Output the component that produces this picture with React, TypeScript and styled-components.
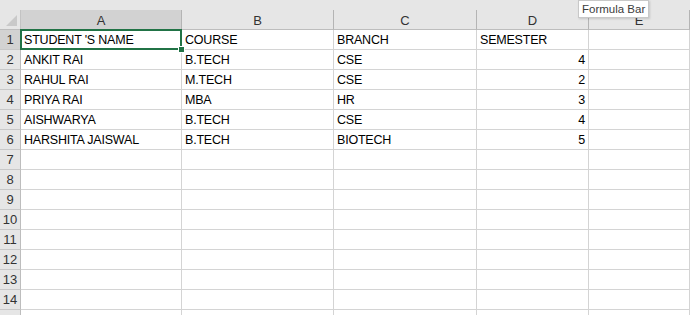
import styled, { createGlobalStyle, css } from "styled-components";

const GlobalStyle = createGlobalStyle`
  body {
    margin: 0;
    background: #ffffff;
    font-family: "Liberation Sans", Arial, sans-serif;
  }
`;

const Sheet = styled.div`
  position: relative;
  width: 690px;
  height: 315px;
  overflow: hidden;
  background: #e6e6e6;
  padding-top: 10px;
  box-sizing: border-box;
`;

const Grid = styled.div`
  display: grid;
  grid-template-columns: 21px 161px 152px 143px 112px 101px 1fr;
  grid-auto-rows: 20px;
  background: #ffffff;
`;

const Corner = styled.div`
  position: relative;
  background: #e6e6e6;
  border-right: 1px solid #c3c3c3;
  border-bottom: 1px solid #bdbdbd;
  box-sizing: border-box;

  &::after {
    content: "";
    position: absolute;
    right: 3px;
    bottom: 3px;
    width: 0;
    height: 0;
    border-left: 11px solid transparent;
    border-bottom: 11px solid #c9c9c9;
  }
`;

const ColHeader = styled.div<{ $selected?: boolean }>`
  display: flex;
  align-items: center;
  justify-content: center;
  background: ${(p) => (p.$selected ? "#d2d2d2" : "#e6e6e6")};
  border-right: 1px solid #b4b4b4;
  border-bottom: 1px solid #bdbdbd;
  box-sizing: border-box;
  font-size: 13px;
  color: #333333;
  padding-top: 2px;
`;

const RowHeader = styled.div<{ $selected?: boolean }>`
  display: flex;
  align-items: flex-end;
  justify-content: center;
  background: ${(p) => (p.$selected ? "#d2d2d2" : "#e6e6e6")};
  border-right: 1px solid #bdbdbd;
  border-bottom: 1px solid #c8c8c8;
  box-sizing: border-box;
  font-size: 13px;
  color: #333333;
  padding-bottom: 2px;
`;

const Cell = styled.div<{ $align?: "left" | "right"; $active?: boolean }>`
  position: relative;
  display: flex;
  align-items: flex-end;
  justify-content: ${(p) => (p.$align === "right" ? "flex-end" : "flex-start")};
  padding: 0 3px 2px 3px;
  border-right: 1px solid #d4d4d4;
  border-bottom: 1px solid #d4d4d4;
  box-sizing: border-box;
  font-size: 12.5px;
  letter-spacing: -0.2px;
  color: #000000;
  white-space: nowrap;

  ${(p) =>
    p.$active &&
    css`
      &::after {
        content: "";
        position: absolute;
        left: -1px;
        top: -1px;
        right: -1px;
        bottom: -1px;
        border: 2px solid #217346;
        pointer-events: none;
      }
      &::before {
        content: "";
        position: absolute;
        right: -4px;
        bottom: -4px;
        width: 5px;
        height: 5px;
        background: #217346;
        border: 1px solid #ffffff;
        z-index: 1;
      }
    `}
`;

const Tooltip = styled.div`
  position: absolute;
  left: 578px;
  top: 0;
  height: 18px;
  padding: 0 3px;
  display: flex;
  align-items: center;
  background: #ffffff;
  border: 1px solid #c8c8c8;
  box-shadow: 1px 1px 2px rgba(0, 0, 0, 0.15);
  font-size: 11.5px;
  color: #3c3c3c;
  box-sizing: border-box;
`;

const columns = ["A", "B", "C", "D", "E", ""];

const data: (string | number)[][] = [
  ["STUDENT 'S NAME", "COURSE", "BRANCH", "SEMESTER"],
  ["ANKIT RAI", "B.TECH", "CSE", 4],
  ["RAHUL RAI", "M.TECH", "CSE", 2],
  ["PRIYA RAI", "MBA", "HR", 3],
  ["AISHWARYA", "B.TECH", "CSE", 4],
  ["HARSHITA JAISWAL", "B.TECH", "BIOTECH", 5],
];

// row 15 only peeks in at the bottom edge, so its number is not drawn
const ROWS = 15;
const LABELLED_ROWS = 14;

export default function App() {
  return (
    <>
      <GlobalStyle />
      <Sheet>
        <Grid>
          <Corner />
          {columns.map((c, i) => (
            <ColHeader key={i} $selected={c === "A"}>
              {c}
            </ColHeader>
          ))}
          {Array.from({ length: ROWS }).map((_, r) => (
            <RowLine key={r} row={r} values={data[r] || []} />
          ))}
        </Grid>
        <Tooltip>Formula Bar</Tooltip>
      </Sheet>
    </>
  );
}

interface RowLineProps {
  row: number;
  values: (string | number)[];
}

const RowLine = ({ row, values }: RowLineProps) => {
  return (
    <>
      <RowHeader $selected={row === 0}>
        {row < LABELLED_ROWS ? row + 1 : ""}
      </RowHeader>
      {columns.map((_, c) => {
        const v = values[c];
        return (
          <Cell
            key={c}
            $align={typeof v === "number" ? "right" : "left"}
            $active={row === 0 && c === 0}
          >
            {v}
          </Cell>
        );
      })}
    </>
  );
};
